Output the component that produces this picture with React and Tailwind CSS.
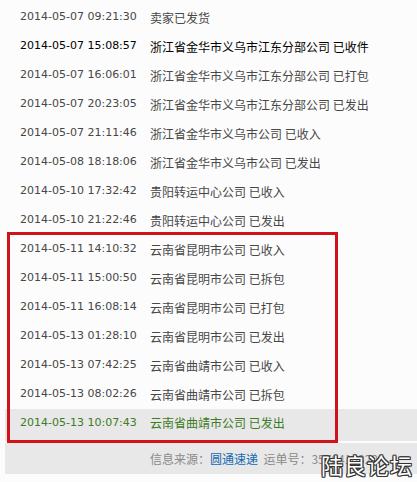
const rows = [
  { time: '2014-05-07 09:21:30', text: '卖家已发货' },
  { time: '2014-05-07 15:08:57', text: '浙江省金华市义乌市江东分部公司 已收件', dark: true },
  { time: '2014-05-07 16:06:01', text: '浙江省金华市义乌市江东分部公司 已打包' },
  { time: '2014-05-07 20:23:05', text: '浙江省金华市义乌市江东分部公司 已发出' },
  { time: '2014-05-07 21:11:46', text: '浙江省金华市义乌市公司 已收入' },
  { time: '2014-05-08 18:18:06', text: '浙江省金华市义乌市公司 已发出' },
  { time: '2014-05-10 17:32:42', text: '贵阳转运中心公司 已收入' },
  { time: '2014-05-10 21:22:46', text: '贵阳转运中心公司 已发出' },
];

const marked = [
  { time: '2014-05-11 14:10:32', text: '云南省昆明市公司 已收入' },
  { time: '2014-05-11 15:00:50', text: '云南省昆明市公司 已拆包' },
  { time: '2014-05-11 16:08:14', text: '云南省昆明市公司 已打包' },
  { time: '2014-05-13 01:28:10', text: '云南省昆明市公司 已发出' },
  { time: '2014-05-13 07:42:25', text: '云南省曲靖市公司 已收入' },
  { time: '2014-05-13 08:02:26', text: '云南省曲靖市公司 已拆包' },
];

function Row({ time, text, dark }) {
  return (
    <div className={`flex items-center h-[29px] pl-[20px] ${dark ? 'text-black' : 'text-[#474747]'}`}>
      <span className="w-[130px] shrink-0 text-[11px] font-['DejaVu_Sans',sans-serif]">{time}</span>
      <span className="text-[12px] whitespace-pre">{text}</span>
    </div>
  );
}

export default function App() {
  return (
    <div className="w-[417px] h-[482px] bg-[#fcfcfc] relative overflow-hidden font-['Noto_Sans_CJK_SC','Noto_Sans',sans-serif]">
      <div className="pt-[3px]">
        {rows.map((r) => (
          <Row key={r.time} {...r} />
        ))}

        <div className="relative">
          {marked.map((r) => (
            <Row key={r.time} {...r} />
          ))}
          {/* latest entry */}
          <div className="ml-[5px] flex items-center h-[32px] pb-[4px] pl-[15px] bg-[#e8e8e8] text-[#3d7b25]">
            <span className="w-[130px] shrink-0 text-[11px] font-['DejaVu_Sans',sans-serif]">2014-05-13 10:07:43</span>
            <span className="text-[12px] whitespace-pre">云南省曲靖市公司 已发出</span>
          </div>
          {/* red annotation frame */}
          <div className="absolute left-[7px] top-[-3px] w-[331px] bottom-[-2px] border-[3px] border-[#d0121b] pointer-events-none" />
        </div>

        <div className="ml-[5px] mt-[2px] h-[31px] bg-[#e8e8e8] flex items-center pl-[145px] text-[12px] text-[#8a8a8a] whitespace-pre">
          <span>信息来源：</span>
          <span className="text-[#1469b0]">圆通速递</span>
          <span>  运单号：3570410320</span>
        </div>
      </div>

      <div className="absolute left-[321px] top-[453px] text-[22px] leading-none tracking-[1px] text-white [text-shadow:1px_0_0_#333,-1px_0_0_#333,0_1px_0_#333,0_-1px_0_#333,1px_1px_0_#333,-1px_-1px_0_#333,1px_-1px_0_#333,-1px_1px_0_#333]">
        陆良论坛
      </div>
    </div>
  );
}
